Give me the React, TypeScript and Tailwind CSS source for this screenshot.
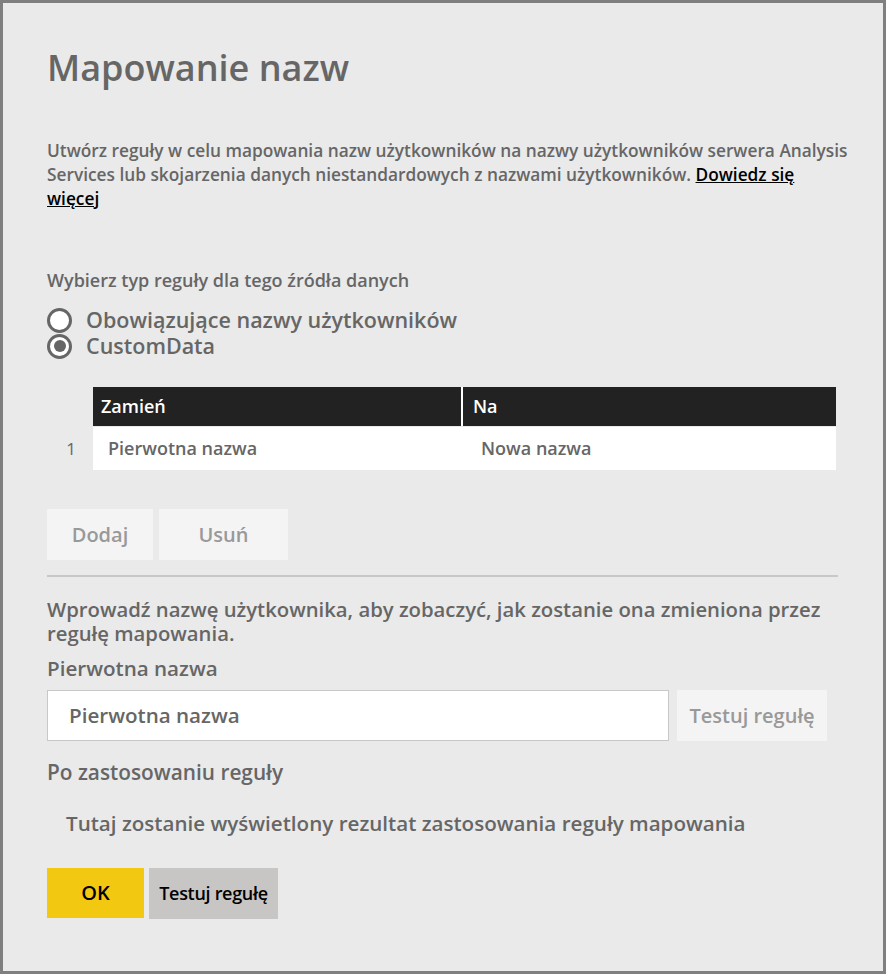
import { useState } from "react"

const font = { fontFamily: '"Open Sans", "Noto Sans", sans-serif' }

export default function App() {
  const [rule, setRule] = useState("custom")

  return (
    <div className="w-[886px] h-[974px] bg-[#7f7f7f] p-[3px]" style={font}>
      <div className="h-full bg-[#eaeaea] pl-[44px] pr-[45px] pt-[41px] text-[#666666]">
        <h1 className="text-[36px] font-semibold leading-[48px]">Mapowanie nazw</h1>

        <p className="mt-[47px] w-[814px] text-[17.3px] font-semibold leading-[24px]">
          Utwórz reguły w celu mapowania nazw użytkowników na nazwy użytkowników serwera Analysis Services lub skojarzenia danych niestandardowych z nazwami użytkowników.{" "}
          <a href="#" className="text-black underline">Dowiedz się<br />więcej</a>
        </p>

        <p className="mt-[57px] text-[18px] font-semibold leading-[24px]">Wybierz typ reguły dla tego źródła danych</p>

        <div className="mt-[15px] flex flex-col">
          {[
            { id: "eff", label: "Obowiązujące nazwy użytkowników" },
            { id: "custom", label: "CustomData" },
          ].map((r) => (
            <div key={r.id} onClick={() => setRule(r.id)} className="flex items-center gap-[14px] h-[26px] cursor-pointer">
              <span className="w-[25px] h-[25px] rounded-full border-[3px] border-[#666666] bg-white flex items-center justify-center">
                {rule === r.id && <span className="w-[12px] h-[12px] rounded-full bg-[#666666]" />}
              </span>
              <span className="text-[21.5px] font-semibold leading-[24px]">{r.label}</span>
            </div>
          ))}
        </div>

        {/* Tabela reguł */}
        <div className="mt-[28px] flex">
          <div className="w-[46px] flex flex-col">
            <div className="h-[40px]" />
            <div className="h-[43px] flex items-center justify-center pl-[2px] text-[17px] text-[#666666]">1</div>
          </div>
          <div className="w-[743px] flex flex-col">
            <div className="h-[39px] bg-[#222222] flex text-white text-[18px] font-semibold">
              <div className="w-[370px] border-r-2 border-white flex items-center pl-[8px]">Zamień</div>
              <div className="flex-1 flex items-center pl-[10px]">Na</div>
            </div>
            <div className="h-[43px] mt-px bg-white flex text-[18px] font-semibold text-[#666666]">
              <div className="w-[372px] flex items-center pl-[15px]">Pierwotna nazwa</div>
              <div className="flex-1 flex items-center pl-[16px]">Nowa nazwa</div>
            </div>
          </div>
        </div>

        <div className="mt-[39px] flex gap-[6px]">
          <button className="w-[106px] h-[51px] bg-[#f4f4f4] text-[#999999] text-[20px] font-semibold">Dodaj</button>
          <button className="w-[129px] h-[51px] bg-[#f4f4f4] text-[#999999] text-[20px] font-semibold">Usuń</button>
        </div>

        <div className="mt-[15px] h-[2px] w-[791px] bg-[#c8c8c8]" />

        <p className="mt-[20px] w-[800px] text-[20.3px] font-semibold leading-[24px]">
          Wprowadź nazwę użytkownika, aby zobaczyć, jak zostanie ona zmieniona przez regułę mapowania.
        </p>
        <p className="mt-[11px] text-[20.6px] font-semibold leading-[24px]">Pierwotna nazwa</p>

        <div className="mt-[10px] flex gap-[8px]">
          <div className="w-[622px] h-[51px] bg-white border border-[#c8c8c8] flex items-center pl-[21px] text-[20.6px] font-semibold">
            Pierwotna nazwa
          </div>
          <button className="w-[150px] h-[51px] bg-[#f4f4f4] text-[#999999] text-[20px] font-semibold">Testuj regułę</button>
        </div>

        <p className="mt-[19px] text-[20.8px] font-semibold leading-[24px]">Po zastosowaniu reguły</p>
        <p className="mt-[27px] pl-[19px] text-[20.6px] font-semibold leading-[24px]">
          Tutaj zostanie wyświetlony rezultat zastosowania reguły mapowania
        </p>

        <div className="mt-[33px] flex gap-[5px]">
          <button className="w-[97px] h-[50px] bg-[#f2c811] text-black text-[20px] font-semibold">OK</button>
          <button className="w-[129px] h-[51px] bg-[#c8c6c4] text-black text-[18px] font-semibold tracking-[-0.3px]">Testuj regułę</button>
        </div>
      </div>
    </div>
  )
}
